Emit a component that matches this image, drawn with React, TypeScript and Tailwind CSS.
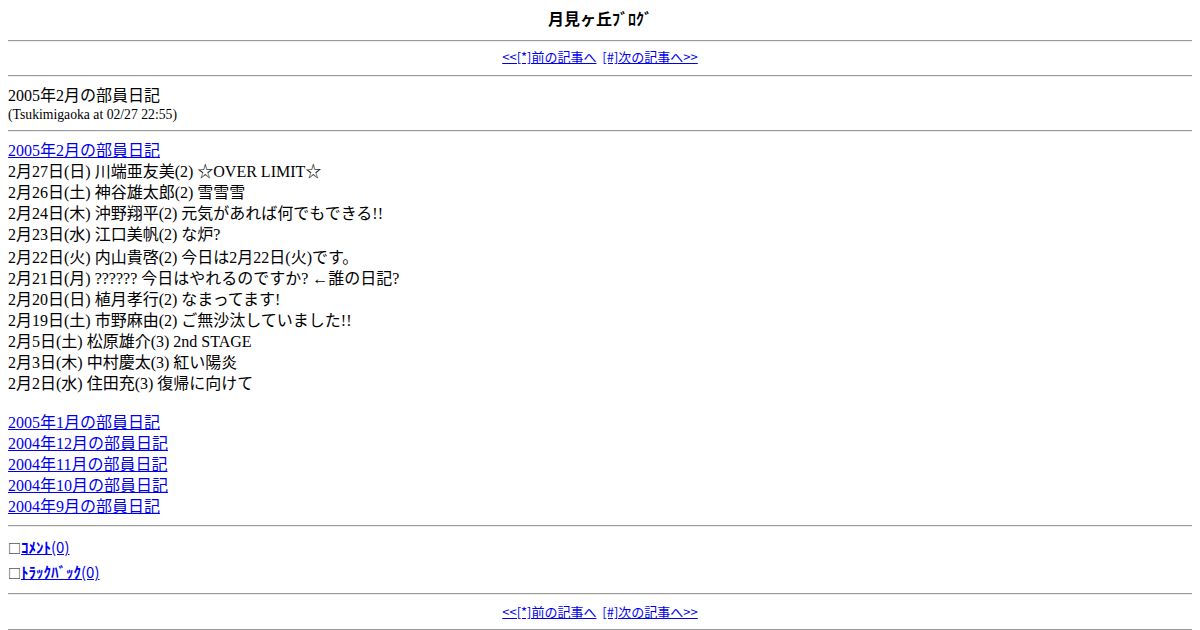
import React from "react";

const font = { fontFamily: '"Liberation Serif", "Noto Sans CJK JP", serif' };
const gothic = { fontFamily: '"Noto Sans CJK JP", "Liberation Sans", sans-serif' };

function Hr() {
  return <div className="h-[2px] border-t border-t-[#9a9a9a] border-b border-b-[#eeeeee]" />;
}

function Nav() {
  return (
    <div className="h-[20px] text-center text-[13px] leading-[20px]" style={gothic}>
      <a href="#" className="text-[#0000ee] underline">&lt;&lt;[*]前の記事へ</a>
      <span>&nbsp; </span>
      <a href="#" className="text-[#0000ee] underline">[#]次の記事へ&gt;&gt;</a>
    </div>
  );
}

const entries = [
  "2月27日(日) 川端亜友美(2) ☆OVER LIMIT☆",
  "2月26日(土) 神谷雄太郎(2) 雪雪雪",
  "2月24日(木) 沖野翔平(2) 元気があれば何でもできる!!",
  "2月23日(水) 江口美帆(2) な炉?",
  "2月22日(火) 内山貴啓(2) 今日は2月22日(火)です。",
  "2月21日(月) ?????? 今日はやれるのですか? ←誰の日記?",
  "2月20日(日) 植月孝行(2) なまってます!",
  "2月19日(土) 市野麻由(2) ご無沙汰していました!!",
  "2月5日(土) 松原雄介(3) 2nd STAGE",
  "2月3日(木) 中村慶太(3) 紅い陽炎",
  "2月2日(水) 住田充(3) 復帰に向けて",
];

const months = [
  "2005年1月の部員日記",
  "2004年12月の部員日記",
  "2004年11月の部員日記",
  "2004年10月の部員日記",
  "2004年9月の部員日記",
];

export default function App() {
  return (
    <div className="bg-white text-black w-[1200px] h-[630px] overflow-hidden px-2 pt-2" style={font}>
      <div className="h-[24px] text-center font-bold text-[16px] leading-[24px]">月見ヶ丘ﾌﾞﾛｸﾞ</div>
      <div className="mt-[8px] mb-[5px]"><Hr /></div>
      <Nav />
      <div className="mt-[8px] mb-[9px]"><Hr /></div>
      <div className="h-[20px] text-[16px] leading-[20px]">2005年2月の部員日記</div>
      <div className="h-[17px] text-[13.7px] leading-[17px]">(Tsukimigaoka at 02/27 22:55)</div>
      <div className="mt-[7px] mb-[8px]"><Hr /></div>
      <div className="text-[16px] leading-[21px]">
        <div className="h-[21px]"><a href="#" className="text-[#0000ee] underline">2005年2月の部員日記</a></div>
        {entries.map((e, i) => (
          <div key={i} className={i === 4 ? "h-[23px] pt-[2px]" : "h-[21px]"}>{e}</div>
        ))}
        <div className="h-[18px]" />
        {months.map((m) => (
          <div key={m} className="h-[21px]"><a href="#" className="text-[#0000ee] underline">{m}</a></div>
        ))}
      </div>
      <div className="mt-[8px] mb-[10px]"><Hr /></div>
      <div className="text-[15px] leading-[20px] flex flex-col gap-[5px]" style={gothic}>
        <div className="h-[20px]"><span className="text-[13px] leading-none">□</span><a href="#" className="text-[#0000ee] underline"><b>ｺﾒﾝﾄ</b>(0)</a></div>
        <div className="h-[20px]"><span className="text-[13px] leading-none">□</span><a href="#" className="text-[#0000ee] underline"><b>ﾄﾗｯｸﾊﾞｯｸ</b>(0)</a></div>
      </div>
      <div className="mt-[11px] mb-[7px]"><Hr /></div>
      <Nav />
      <div className="mt-[7px]"><Hr /></div>
    </div>
  );
}
